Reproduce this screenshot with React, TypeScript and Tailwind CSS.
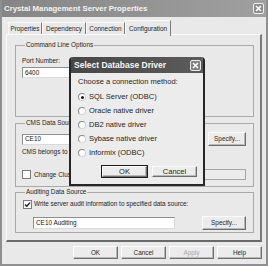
import type { ReactNode } from "react"

const Button = ({
  label,
  disabled = false,
  isDefault = false,
  className = "",
}: {
  label: string
  disabled?: boolean
  isDefault?: boolean
  className?: string
}) => (
  <div
    className={`flex items-center justify-center border border-t-[#fcfcfc] border-l-[#fcfcfc] border-r-[#6e6e6e] border-b-[#6e6e6e] bg-[#ececec] shadow-[inset_-1px_-1px_0_#b8b8b8] ${
      isDefault ? "outline outline-1 outline-[#1c1c1c]" : ""
    } ${disabled ? "text-[#a6a6a6]" : "text-[#1e1e1e]"} ${className}`}
  >
    {label}
  </div>
)

const TextBox = ({ value = "", className = "" }: { value?: string; className?: string }) => (
  <div
    className={`flex items-center border border-[#8e8e8e] border-b-[#dadada] border-r-[#dadada] bg-white pl-[2px] text-[#151515] ${className}`}
  >
    {value}
  </div>
)

const CheckBox = ({ checked = false }: { checked?: boolean }) => (
  <div className="flex h-[9px] w-[9px] shrink-0 items-center justify-center border border-[#7d7d7d] bg-white">
    {checked && (
      <svg width="7" height="7" viewBox="0 0 7 7">
        <path d="M1 3.5 L2.8 5.3 L6 1.6" stroke="#1a1a1a" strokeWidth="1.4" fill="none" />
      </svg>
    )}
  </div>
)

const Radio = ({ label, checked = false }: { label: string; checked?: boolean }) => (
  <div className="flex h-[14px] items-center gap-[3px]">
    <div className="flex h-[8px] w-[8px] items-center justify-center rounded-full border border-[#8a8a8a] border-b-[#d0d0d0] border-r-[#d0d0d0] bg-white">
      {checked && <div className="h-[3px] w-[3px] rounded-full bg-[#1a1a1a]" />}
    </div>
    <span>{label}</span>
  </div>
)

const GroupBox = ({
  title,
  className = "",
  children,
}: {
  title: string
  className?: string
  children: ReactNode
}) => (
  <fieldset className={`border border-[#a8a8a8] pl-[6px] pr-[7px] ${className}`}>
    <legend className="ml-[3px] px-[1px] leading-[8px] text-[#1e1e1e]">{title}</legend>
    {children}
  </fieldset>
)

const tabs = ["Properties", "Dependency", "Connection", "Configuration"]
const tabWidths = ["w-[34px]", "w-[44px]", "w-[39px]", "w-[46px]"]

const drivers = [
  "SQL Server (ODBC)",
  "Oracle native driver",
  "DB2 native driver",
  "Sybase native driver",
  "Informix (ODBC)",
]

const App = () => {
  return (
    <div className="relative flex h-[266px] w-[268px] flex-col overflow-hidden border-x-2 border-b-2 border-[#8f8f8f] bg-[#e9e9e9] font-['Liberation_Sans',Arial,sans-serif] text-[6.4px] text-[#1e1e1e]">
      {/* title bar */}
      <div className="-mx-[2px] flex h-[17px] shrink-0 items-center justify-between bg-gradient-to-r from-[#858585] to-[#a0a0a0] pl-[4px] pr-[4px]">
        <span className="text-[7.8px] font-bold text-[#f4f4f4]">Crystal Management Server Properties</span>
        <div className="flex h-[11px] w-[11px] items-center justify-center rounded-[2px] border border-[#f0f0f0] bg-[#8c8c8c]">
          <svg width="7" height="7" viewBox="0 0 7 7">
            <path d="M1 1 L6 6 M6 1 L1 6" stroke="#fff" strokeWidth="1.6" />
          </svg>
        </div>
      </div>

      <div className="flex flex-1 flex-col px-[4px]">
        {/* tabs */}
        <div className="mt-[3px] flex h-[15px] items-end pl-[2px]">
          {tabs.map((tab, idx) => {
            const selected = idx === 3
            return (
              <div
                key={tab}
                className={`flex items-center justify-center border-l border-t border-r border-l-[#fbfbfb] border-t-[#fbfbfb] border-r-[#7c7c7c] ${tabWidths[idx]} ${
                  selected ? "relative z-10 h-[16px] -mb-[1px] bg-[#e9e9e9]" : "h-[13px]"
                }`}
              >
                {tab}
              </div>
            )
          })}
        </div>

        {/* panel */}
        <div className="-mt-[1px] flex h-[208px] flex-col border-t border-l border-r-2 border-b-2 border-t-[#fbfbfb] border-l-[#fbfbfb] border-r-[#7a7a7a] border-b-[#6a6a6a] pl-[8px] pr-[6px]">
          <GroupBox title="Command Line Options" className="mt-[6px] h-[76px]">
            <div className="mt-[8px] leading-[8px]">Port Number:</div>
            <TextBox value="6400" className="mt-[2px] h-[11px] w-[70px]" />
          </GroupBox>

          <GroupBox title="CMS Data Source" className="mt-[2px] h-[68px]">
            <div className="mt-[5px] flex h-[14px] items-center">
              <TextBox value="CE10" className="h-[11px] w-[178px]" />
              <Button label="Specify..." className="ml-auto h-[14px] w-[38px]" />
            </div>
            <div className="mt-[2px] leading-[8px]">CMS belongs to cluster:</div>
            <div className="mt-[12px] flex h-[13px] items-center gap-[3px]">
              <CheckBox />
              <span>Change Cluster Name to:</span>
              <div className="ml-auto h-[11px] w-[70px] border border-[#a6a6a6] bg-[#ececec]" />
            </div>
          </GroupBox>

          <GroupBox title="Auditing Data Source" className="mt-[1px] h-[45px]">
            <div className="mt-[4px] flex h-[8px] items-center gap-[2px] pl-[1px]">
              <CheckBox checked />
              <span>Write server audit information to specified data source:</span>
            </div>
            <div className="mt-[8px] flex h-[14px] items-center pl-[11px]">
              <TextBox value="CE10 Auditing" className="h-[12px] w-[142px]" />
              <Button label="Specify..." className="ml-auto h-[14px] w-[44px]" />
            </div>
          </GroupBox>
        </div>

        {/* bottom buttons */}
        <div className="mt-[4px] flex h-[13px] justify-end gap-[3px]">
          <Button label="OK" className="w-[45px]" />
          <Button label="Cancel" className="w-[45px]" />
          <Button label="Apply" disabled className="w-[45px]" />
          <Button label="Help" className="w-[45px]" />
        </div>
      </div>

      {/* modal dialog */}
      <div className="absolute left-[67px] top-[57px] z-20 flex h-[129px] w-[136px] flex-col overflow-hidden rounded-t-[4px] border-x-2 border-b-2 border-[#262626] bg-[#ececec] text-[7.5px]">
        <div className="-mx-[2px] flex h-[16px] shrink-0 items-center justify-between bg-gradient-to-r from-[#474747] to-[#5c5c5c] pl-[5px] pr-[4px]">
          <span className="text-[8.5px] font-bold text-[#f7f7f7]">Select Database Driver</span>
          <div className="flex h-[11px] w-[11px] items-center justify-center rounded-[2px] border border-[#eaeaea] bg-[#808080]">
            <svg width="7" height="7" viewBox="0 0 7 7">
              <path d="M1 1 L6 6 M6 1 L1 6" stroke="#fff" strokeWidth="1.6" />
            </svg>
          </div>
        </div>
        <div className="flex flex-1 flex-col pl-[7px]">
          <div className="mt-[5px] leading-[8px]">Choose a connection method:</div>
          <div className="mt-[4px] flex flex-col">
            {drivers.map((driver, idx) => (
              <Radio key={driver} label={driver} checked={idx === 0} />
            ))}
          </div>
          <div className="mt-[6px] flex h-[11px] justify-end gap-[5px] pr-[6px]">
            <Button label="OK" isDefault className="w-[45px]" />
            <Button label="Cancel" className="w-[45px]" />
          </div>
        </div>
      </div>
    </div>
  )
}

export default App
